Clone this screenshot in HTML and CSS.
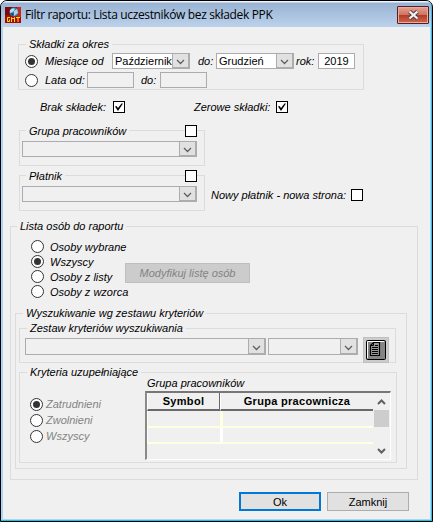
FILE: index.html
```html
<!DOCTYPE html>
<html lang="pl">
<head>
<meta charset="utf-8">
<title>Filtr raportu</title>
<link rel="stylesheet" href="styles.css">
</head>
<body>
<svg class="defs" width="0" height="0">
  <symbol id="chevron" viewBox="0 0 9 6"><path d="M1 1 L4.5 4.5 L8 1" fill="none" stroke="#606060" stroke-width="1.3"/></symbol>
  <symbol id="arrow" viewBox="0 0 9 6"><path d="M1 1 L4.5 4.500 L8 1" fill="none" stroke="#606060" stroke-width="2"/></symbol>
  <symbol id="tick" viewBox="0 0 10 10"><path d="M1 4.5 L2.5 4 L4 6 L7.5 1.5 L9 1.5 L4 9 Z" fill="#000"/></symbol>
</svg>
<main class="window">
  <header class="titlebar">
    <svg class="app-icon" width="16" height="16" viewBox="0 0 16 16">
      <rect width="16" height="16" fill="#a80808"/>
      <path d="M0 0h7v8H0z" fill="#7c0808"/><path d="M12 0h4v10h-4z" fill="#c92420"/>
      <circle cx="9" cy="5" r="4.6" fill="#3978a8"/>
      <path d="M5 3 Q8 0 10 2 L8 5 L5 6z" fill="#a9e2f2"/><path d="M9 4 L12 2 L13 6 L9 9z" fill="#b9d1dc"/>
      <path d="M6 6 L9 7 L7 9z" fill="#143c7c"/>
      <path d="M5 10.500H2.500V14.500H4.500V12.500M6.500 15V10.500L8 12L9.500 10.500V15M11 10.500H15M13 10.500V15" fill="none" stroke="#ffe600" stroke-width="1"/>
    </svg>
    <h1 class="title">Filtr raportu: Lista uczestników bez składek PPK</h1>
    <button class="close" aria-label="Zamknij okno"><svg width="13" height="10" viewBox="0 0 13 10"><path d="M2.500 1.500L10.500 8.500M10.500 1.500L2.500 8.500" stroke="#554044" stroke-width="4.200"/><path d="M2.500 1.500L10.500 8.500M10.500 1.500L2.500 8.500" stroke="#f2f2f2" stroke-width="2.300"/></svg></button>
  </header>
  <div class="content">
    <section class="group period">
      <div class="legend">Składki za okres</div>
      <div class="line months">
        <i class="radio on"></i><span class="w-months">Miesiące od</span>
        <div class="select live w-month"><span>Październik</span><b><svg><use href="#chevron"/></svg></b></div>
        <span class="w-do">do:</span>
        <div class="select live w-month"><span>Grudzień</span><b><svg><use href="#chevron"/></svg></b></div>
        <span class="w-rok">rok:</span><div class="field year">2019</div>
      </div>
      <div class="line years">
        <i class="radio"></i><span class="w-years">Lata od:</span><div class="field"></div><span class="w-do2">do:</span><div class="field"></div>
      </div>
    </section>
    <div class="line checks">
      <span class="w-brak">Brak składek:</span><i class="check"><svg><use href="#tick"/></svg></i>
      <span class="w-zero">Zerowe składki:</span><i class="check"><svg><use href="#tick"/></svg></i>
    </div>
    <div class="filters">
      <div class="filter-col">
        <section class="group filter">
          <div class="head"><span class="legend">Grupa pracowników</span><i class="check"></i></div>
          <div class="select"><b><svg><use href="#chevron"/></svg></b></div>
        </section>
        <section class="group filter">
          <div class="head"><span class="legend">Płatnik</span><i class="check"></i></div>
          <div class="select"><b><svg><use href="#chevron"/></svg></b></div>
        </section>
      </div>
      <div class="line newpage"><span>Nowy płatnik - nowa strona:</span><i class="check"></i></div>
    </div>
    <section class="group people">
      <div class="legend">Lista osób do raportu</div>
      <div class="people-row">
        <div class="radios">
          <div class="line"><i class="radio"></i><span>Osoby wybrane</span></div>
          <div class="line"><i class="radio on"></i><span>Wszyscy</span></div>
          <div class="line"><i class="radio"></i><span>Osoby z listy</span></div>
          <div class="line"><i class="radio"></i><span>Osoby z wzorca</span></div>
        </div>
        <button class="modify">Modyfikuj listę osób</button>
      </div>
      <section class="group search">
        <div class="legend">Wyszukiwanie wg zestawu kryteriów</div>
        <section class="group sets">
          <div class="legend">Zestaw kryteriów wyszukiwania</div>
          <div class="sets-row">
            <div class="select w-set"><b><svg><use href="#chevron"/></svg></b></div>
            <div class="select w-sub"><b><svg><use href="#chevron"/></svg></b></div>
            <button class="doc" aria-label="Zestawy"><svg width="20" height="20" viewBox="0 0 20 20">
              <rect x=".5" y=".5" width="19" height="19" rx="1" fill="#858585" stroke="#000"/>
              <path d="M1.500 18V1.500H18" fill="none" stroke="#fff"/>
              <path d="M7.500 2.500H13.500V15.500H4.500V5.500Z" fill="#999" stroke="#000" stroke-width="1.200"/>
              <path d="M7.500 2.500V5.500H4.500M9 5.500H12M6 7.500H12M6 9.500H12M6 11.500H12M6 13.500H12" stroke="#000" fill="none"/>
            </svg></button>
          </div>
        </section>
        <section class="group extra">
          <div class="legend">Kryteria uzupełniające</div>
          <div class="extra-row">
            <div class="radios dim">
              <div class="line"><i class="radio on"></i><span>Zatrudnieni</span></div>
              <div class="line"><i class="radio"></i><span>Zwolnieni</span></div>
              <div class="line"><i class="radio"></i><span>Wszyscy</span></div>
            </div>
            <div class="list">
              <div class="caption">Grupa pracowników</div>
              <div class="frame">
                <div class="grid">
                  <div class="th">Symbol</div><div class="th">Grupa pracownicza</div>
                  <div class="td cur"></div><div class="td cur"></div>
                  <div class="td"></div><div class="td"></div>
                </div>
                <div class="scroll">
                  <svg class="up"><use href="#arrow"/></svg>
                  <div class="thumb"></div>
                  <svg class="down"><use href="#arrow"/></svg>
                </div>
              </div>
            </div>
          </div>
        </section>
      </section>
    </section>
    <footer class="actions"><button class="btn ok">Ok</button><button class="btn">Zamknij</button></footer>
  </div>
</main>
</body>
</html>
```

FILE: styles.css
```css
* { box-sizing: border-box; }
body { margin: 0; background: #fff; font: italic 11px/14px "Liberation Sans", Arial, sans-serif; letter-spacing: 0; color: #000; white-space: nowrap; overflow: hidden; }
.defs { display: block; height: 0; }
button { font: inherit; letter-spacing: inherit; padding: 0; border-radius: 0; }
.window { width: 433px; height: 522px; border: 1px solid #000; border-radius: 7px 7px 0 0; background: #a9d7f3; overflow: hidden; padding: 0 2px 2px 1px; box-shadow: inset 0 -1px #16c4ea, inset -1px 0 #35bde8; }
.titlebar { height: 26px; display: flex; align-items: flex-start; padding: 5px 2px 0 3px; margin: 0 -1px; background: linear-gradient(#edf4fb 0 1px, #98b3d2 2px, #bcd2ec 100%); }
.app-icon { margin: 1px 4px 0 1px; flex: none; }
.title { margin: 0; font: normal 12px/18px "Open Sans", "Noto Sans", sans-serif; letter-spacing: -.35px; flex: 1; }
.close { width: 32px; height: 18px; border: 1px solid #5b1c1c; border-radius: 1px; background: linear-gradient(#e3a391, #cf7460 48%, #b63a25 52%, #c96a50); box-shadow: inset 0 0 0 1px #e7ada2; display: grid; place-items: center; }
.content { height: 492px; margin-left: 1px; padding-top: 17px; background: #f0f0f0; }
.group { border: 1px solid #dcdcdc; }
.legend { width: fit-content; height: 14px; margin: -8px 0 0 7px; padding: 0 3px; background: #f0f0f0; }
.line { display: flex; align-items: center; }
.line > * { flex: none; }
.period { width: 346px; height: 46px; margin-left: 15px; }
.months { height: 16px; margin: 2px 0 0 6px; }
.years { height: 16px; margin: 3px 0 0 6px; }
.radio { width: 13px; height: 13px; border: 1px solid #333; border-radius: 50%; background: #fff; display: grid; place-items: center; margin-right: 7px; }
.radio.on::after { content: ""; width: 7px; height: 7px; border-radius: 50%; background: #333; }
.w-months { width: 67px; }
.w-do { width: 26px; padding-left: 8px; }
.w-rok { width: 24px; padding-left: 2px; }
.w-years { width: 42px; }
.w-do2 { width: 26px; padding-left: 7px; }
.select { height: 16px; border: 1px solid #ababb0; display: flex; justify-content: flex-end; font-style: normal; line-height: 14px; }
.select span { flex: 1; padding-left: 2px; }
.select.live { background: #fff; }
.select b { width: 17px; background: #e1e1e1; border: 1px solid #adadad; border-width: 0 1px 1px 1px; display: grid; place-items: center; flex: none; }
.select svg { width: 9px; height: 6px; margin-top: 3px; }
.w-month { width: 78px; letter-spacing: 0; }
.field { width: 47px; height: 16px; border: 1px solid #ababb0; }
.year { width: 37px; background: #fff; font-style: normal; text-align: center; letter-spacing: 0; }
.check { width: 12px; height: 12px; border: 1px solid #000; background: #fff; display: grid; place-items: center; flex: none; }
.check svg { width: 10px; height: 10px; }
.checks { height: 12px; margin: 11px 0 0 37px; }
.w-brak { width: 73px; }
.w-zero { width: 82px; margin-left: 69px; }
.filters { display: flex; margin: 17px 0 0 16px; }
.filter-col { display: grid; gap: 9px; width: 186px; }
.filter { height: 36px; }
.filter .head { display: flex; justify-content: space-between; height: 12px; margin: -6px 7px 0 6px; }
.filter .legend { margin: -1px 0 0; }
.filter .select { width: 175px; margin: 4px 0 0 2px; }
.newpage { height: 12px; margin: 59px 0 0 6px; }
.newpage span { width: 140px; }
.people { width: 408px; height: 254px; margin: 15px 0 0 7px; }
.people > .legend { margin-left: 6px; }
.people-row { display: flex; margin: 6px 0 0 20px; height: 60px; }
.radios { width: 94px; }
.radios .line { height: 15px; }
.radios .radio { margin-right: 6px; }
.modify { width: 125px; height: 20px; margin-top: 24px; background: #ccc; border: 1px solid #bfbfbf; color: #838383; }
.search { width: 392px; height: 156px; margin: 14px 0 0 4px; }
.sets { width: 377px; height: 35px; margin: 8px 0 0 3px; }
.sets-row { display: flex; margin: 2px 0 0 5px; height: 26px; }
.sets .select { height: 17px; margin-top: 1px; }
.w-set { width: 241px; }
.w-sub { width: 90px; margin-left: 2px; }
.doc { width: 26px; height: 26px; margin-left: 5px; border: 1px solid #bfbfbf; background: #ccc; display: grid; place-items: center; }
.extra { width: 378px; height: 91px; margin: 9px 0 0 3px; }
.extra-row { display: flex; margin-left: 10px; }
.dim { width: 115px; padding-top: 17px; color: #838383; }
.dim .line { height: 16px; }
.dim .radio { margin-right: 3px; }
.list { width: 246px; }
.caption { height: 12px; margin-left: 2px; line-height: 8px; }
.frame { display: flex; height: 69px; border: solid; border-width: 2px 1px 1px 2px; border-color: #777 #fff #fff #8a8a8a; }
.grid { display: grid; grid-template-columns: 73px 153px; grid-template-rows: 18px 17px 16px; flex: none; }
.th { font-style: normal; font-weight: bold; font-size: 11px; line-height: 17px; text-align: center; letter-spacing: .3px; border-bottom: 2px solid #696969; border-left: 1px solid #fff; }
.th:first-child { border-right: 1px solid #696969; }
.td { border-bottom: 2px solid #ffffe1; border-left: 3px solid #fff; }
.td:nth-child(odd) { border-left-width: 1px; }
.td.cur { border-left-color: #ffffe1; }
.scroll { width: 16px; display: flex; flex-direction: column; align-items: center; }
.scroll svg { width: 9px; height: 6px; }
.up { margin-top: 6px; transform: rotate(180deg); }
.thumb { width: 15px; height: 17px; margin-top: 5px; background: #cdcdcd; }
.down { margin-top: 21px; }
.actions { display: flex; gap: 6px; margin: 12px 0 0 236px; }
.btn { width: 82px; height: 19px; border: 1px solid #adadad; background: #e1e1e1; font-style: normal; font-size: 11px; letter-spacing: 0; color: #000; }
.ok { border: 2px solid #0078d7; }
```
